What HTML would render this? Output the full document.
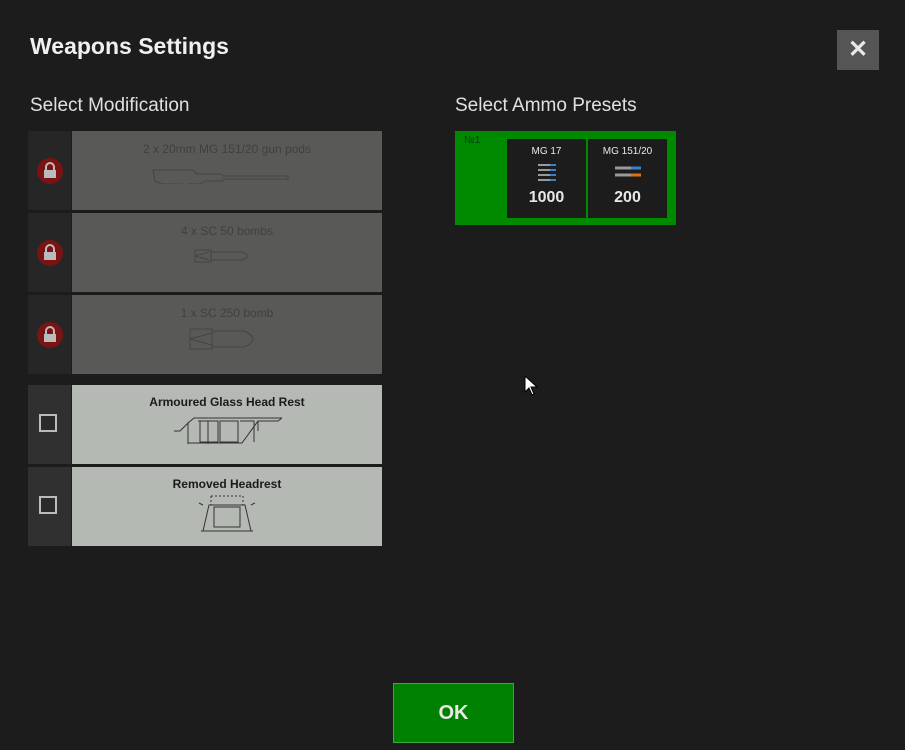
<!DOCTYPE html>
<html><head><style>
body{margin:0;width:905px;height:750px;background:#1c1c1c;font-family:"Liberation Sans",sans-serif;position:relative;overflow:hidden;color:#e8e8e8}
.a{position:absolute}
.row{position:absolute;left:28px;width:354px;height:79px}
.lc{position:absolute;left:0;top:0;width:43px;height:100%;background:#262626}
.ct{position:absolute;left:44px;top:0;right:0;height:100%;text-align:center;font-size:12px}
.lock{position:absolute;left:9px;top:27px;width:26px;height:26px;border-radius:50%;background:#7a1414}
.cb{position:absolute;left:11px;top:29px;width:18px;height:18px;border:2px solid #bbb;box-sizing:border-box;background:#2a2a2a}
.card{position:absolute;top:8px;width:79px;height:79px;background:#1c1c1c;text-align:center}
</style></head><body>
<div class="a" style="left:30px;top:33px;font-size:23px;font-weight:bold;color:#f0f0f0">Weapons Settings</div>
<div class="a" style="left:837px;top:30px;width:42px;height:40px;background:#555;color:#e8e8e8;font-size:24px;font-weight:bold;text-align:center;line-height:40px">✕</div>
<div class="a" style="left:30px;top:95px;font-size:19px;color:#e0e0e0">Select Modification</div>
<div class="a" style="left:455px;top:95px;font-size:19px;color:#e0e0e0">Select Ammo Presets</div>

<div class="row" style="top:131px"><div class="lc"><div class="lock"><svg width="26" height="26"><path d="M9 12v-3a4 4 0 0 1 8 0v3" stroke="#bbb" stroke-width="2" fill="none"/><rect x="7" y="12" width="12" height="8" fill="#bbb"/></svg></div></div><div class="ct" style="background:#595a58;color:#404040"><div style="margin-top:11px">2 x 20mm MG 151/20 gun pods</div>
<svg width="160" height="20" style="margin-top:8px" stroke="#444" fill="none"><path d="M6 6h40l4 4h24l2 2h65v3h-65v2h-18l-5 3h-12l-2 4h-4v-4h-20l-7-3z"/></svg></div></div>
<div class="row" style="top:213px"><div class="lc"><div class="lock"><svg width="26" height="26"><path d="M9 12v-3a4 4 0 0 1 8 0v3" stroke="#bbb" stroke-width="2" fill="none"/><rect x="7" y="12" width="12" height="8" fill="#bbb"/></svg></div></div><div class="ct" style="background:#595a58;color:#404040"><div style="margin-top:11px">4 x SC 50 bombs</div>
<svg width="70" height="20" style="margin-top:8px" stroke="#444" fill="none"><path d="M3 4h16v12h-16zM19 6h30q14 4 0 8h-30M3 10l14-4M3 10l14 4"/></svg></div></div>
<div class="row" style="top:295px"><div class="lc"><div class="lock"><svg width="26" height="26"><path d="M9 12v-3a4 4 0 0 1 8 0v3" stroke="#bbb" stroke-width="2" fill="none"/><rect x="7" y="12" width="12" height="8" fill="#bbb"/></svg></div></div><div class="ct" style="background:#595a58;color:#404040"><div style="margin-top:11px">1 x SC 250 bomb</div>
<svg width="80" height="26" style="margin-top:6px" stroke="#444" fill="none"><path d="M3 3h22v20h-22zM25 5h32q18 8 0 16h-32M3 13l22-6M3 13l22 6"/></svg></div></div>

<div class="row" style="top:385px"><div class="lc" style="background:#303030"><div class="cb"></div></div><div class="ct" style="background:#b4b9b3;color:#1a1a1a;font-weight:bold"><div style="margin-top:10px">Armoured Glass Head Rest</div>
<svg width="110" height="32" style="margin-top:3px" stroke="#333" fill="none"><path d="M2 19h6l8-8v22M16 11l6-5h88l-4 3h-20l-16 22h-54zM26 9h10v24M28 9h18v21h-18zM48 9h18v21h-18zM68 9h14v21M86 9v10"/></svg></div></div>
<div class="row" style="top:467px"><div class="lc" style="background:#303030"><div class="cb"></div></div><div class="ct" style="background:#b4b9b3;color:#1a1a1a;font-weight:bold"><div style="margin-top:10px">Removed Headrest</div>
<svg width="60" height="40" style="margin-top:2px" stroke="#333" fill="none"><path d="M14 3h32v9M14 3v9" stroke-dasharray="2 2"/><path d="M12 12h36l6 26h-48zM17 14h26v20h-26zM4 38h52M6 12l-4-2M54 12l4-2"/></svg></div></div>

<div class="a" style="left:455px;top:131px;width:221px;height:94px;background:#008a00">
<div class="a" style="left:9px;top:4px;font-size:10px;color:#0a3a0a">№1</div>
<div class="card" style="left:52px"><div style="font-size:10px;margin-top:7px">MG 17</div>
<svg width="24" height="20" style="margin-top:5px"><g stroke-width="2"><path d="M3 3h12M3 8h12M3 13h12M3 18h12" stroke="#999"/><path d="M15 3h6M15 8h6M15 13h6M15 18h6" stroke="#3a7fd0"/></g></svg>
<div style="font-size:16px;font-weight:bold;margin-top:2px">1000</div></div>
<div class="card" style="left:133px"><div style="font-size:10px;margin-top:7px">MG 151/20</div>
<svg width="30" height="20" style="margin-top:5px"><g stroke-width="3"><path d="M2 6h16M2 13h16" stroke="#999"/><path d="M18 6h10" stroke="#3a7fd0"/><path d="M18 13h10" stroke="#e07010"/></g></svg>
<div style="font-size:16px;font-weight:bold;margin-top:2px">200</div></div>
</div>

<svg class="a" style="left:524px;top:375px" width="14" height="22"><path d="M1 1v16l4-4 3 7 2-1-3-7h6z" fill="#fff" stroke="#000"/></svg>

<div class="a" style="left:393px;top:683px;width:121px;height:60px;background:#008000;box-sizing:border-box;border:1px solid #3aa83a;text-align:center;line-height:58px;font-size:20px;font-weight:bold;color:#e8e8e8">OK</div>
</body></html>
